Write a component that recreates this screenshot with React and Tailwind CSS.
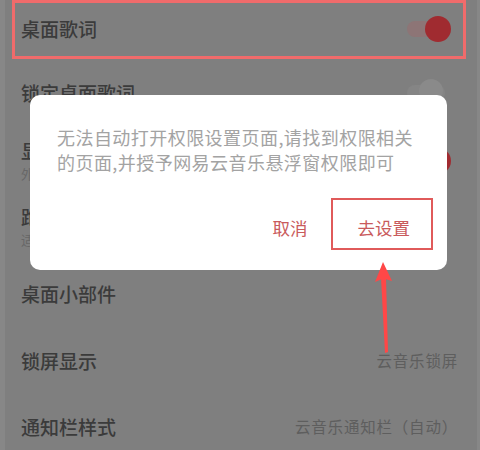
import React from 'react';

const FONT = { fontFamily: '"Noto Sans CJK SC", "Noto Sans", sans-serif' };

function Toggle({ on }) {
  if (!on) {
    return (
      <div className="relative w-[38px] h-[16px] rounded-full bg-[#858585]">
        <div className="absolute left-[12px] top-[-6px] w-[24px] h-[24px] rounded-full bg-[#8a8a8a]" />
      </div>
    );
  }
  return (
    <div className="relative w-[38px] h-[16px] rounded-full bg-[#8d7576]">
      <div className="absolute right-[-6px] top-[-5px] w-[26px] h-[26px] rounded-full bg-[#a02b30]" />
    </div>
  );
}

function Row({ title, sub, value, toggle, className }) {
  return (
    <div className={'flex items-center justify-between ' + className}>
      <div className="flex flex-col">
        <span className="text-[19px] leading-[24px] font-medium text-[#3b3b3b]">{title}</span>
        {sub && <span className="text-[13px] leading-[20px] mt-[1px] text-[#676767]">{sub}</span>}
      </div>
      {toggle !== undefined && (
        <div className="mr-[10px]">
          <Toggle on={toggle} />
        </div>
      )}
      {value && (
        <span className="text-[15.5px] tracking-[0.8px] text-[#5e5e5e] -mr-[3px]">{value}</span>
      )}
    </div>
  );
}

export default function App() {
  return (
    <div
      className="relative w-[480px] h-[450px] overflow-hidden bg-[#7f7f7f] border-l-[5px] border-r-[3px] border-[#878787]"
      style={FONT}
    >
      <div className="flex flex-col pl-[16px] pr-[22px]">
        <Row title="桌面歌词" toggle={true} className="h-[58px]" />
        <Row title="锁定桌面歌词" toggle={false} className="h-[70px]" />
        <Row title="显示歌词翻译" sub="外文歌词显示翻译" toggle={true} className="h-[66px]" />
        <Row title="跑步模式歌词" sub="适用于跑步场景" className="h-[66px]" />
        <Row title="桌面小部件" className="h-[68px]" />
        <Row title="锁屏显示" value="云音乐锁屏" className="h-[66px]" />
        <Row title="通知栏样式" value="云音乐通知栏（自动）" className="h-[66px]" />
      </div>

      {/* permission dialog */}
      <div className="absolute left-[25px] top-[95px] w-[417px] h-[175px] rounded-[10px] bg-white flex flex-col pl-[27px] pr-[20px] pt-[30px]">
        <p className="text-[18px] leading-[25px] tracking-[0.45px] text-[#a3a3a3] whitespace-nowrap">
          无法自动打开权限设置页面,请找到权限相关
          <br />
          的页面,并授予网易云音乐悬浮窗权限即可
        </p>
        <div className="flex justify-end items-center gap-[50px] mt-[41px] pr-[17px]">
          <span className="text-[17.5px] leading-[24px] text-[#c95a5c]">取消</span>
          <span className="text-[17.5px] leading-[24px] text-[#c95a5c]">去设置</span>
        </div>
      </div>

      {/* annotations */}
      <div className="absolute left-[7px] top-0 w-[454px] h-[59px] border-[3px] border-[#f06b6b]" />
      <div className="absolute left-[326px] top-[198px] w-[102px] h-[52px] border-[2.5px] border-[#e05a5a]" />
      <svg className="absolute left-[360px] top-[258px]" width="40" height="100" viewBox="0 0 40 100">
        <polygon points="18,4 10,24 17,21 18,21" fill="#ff4747" />
        <polygon points="18,4 27,23 20,21 18,21" fill="#ff4747" />
        <polygon points="16,20 21,20 23,94 20,95" fill="#ff4747" />
      </svg>
    </div>
  );
}
